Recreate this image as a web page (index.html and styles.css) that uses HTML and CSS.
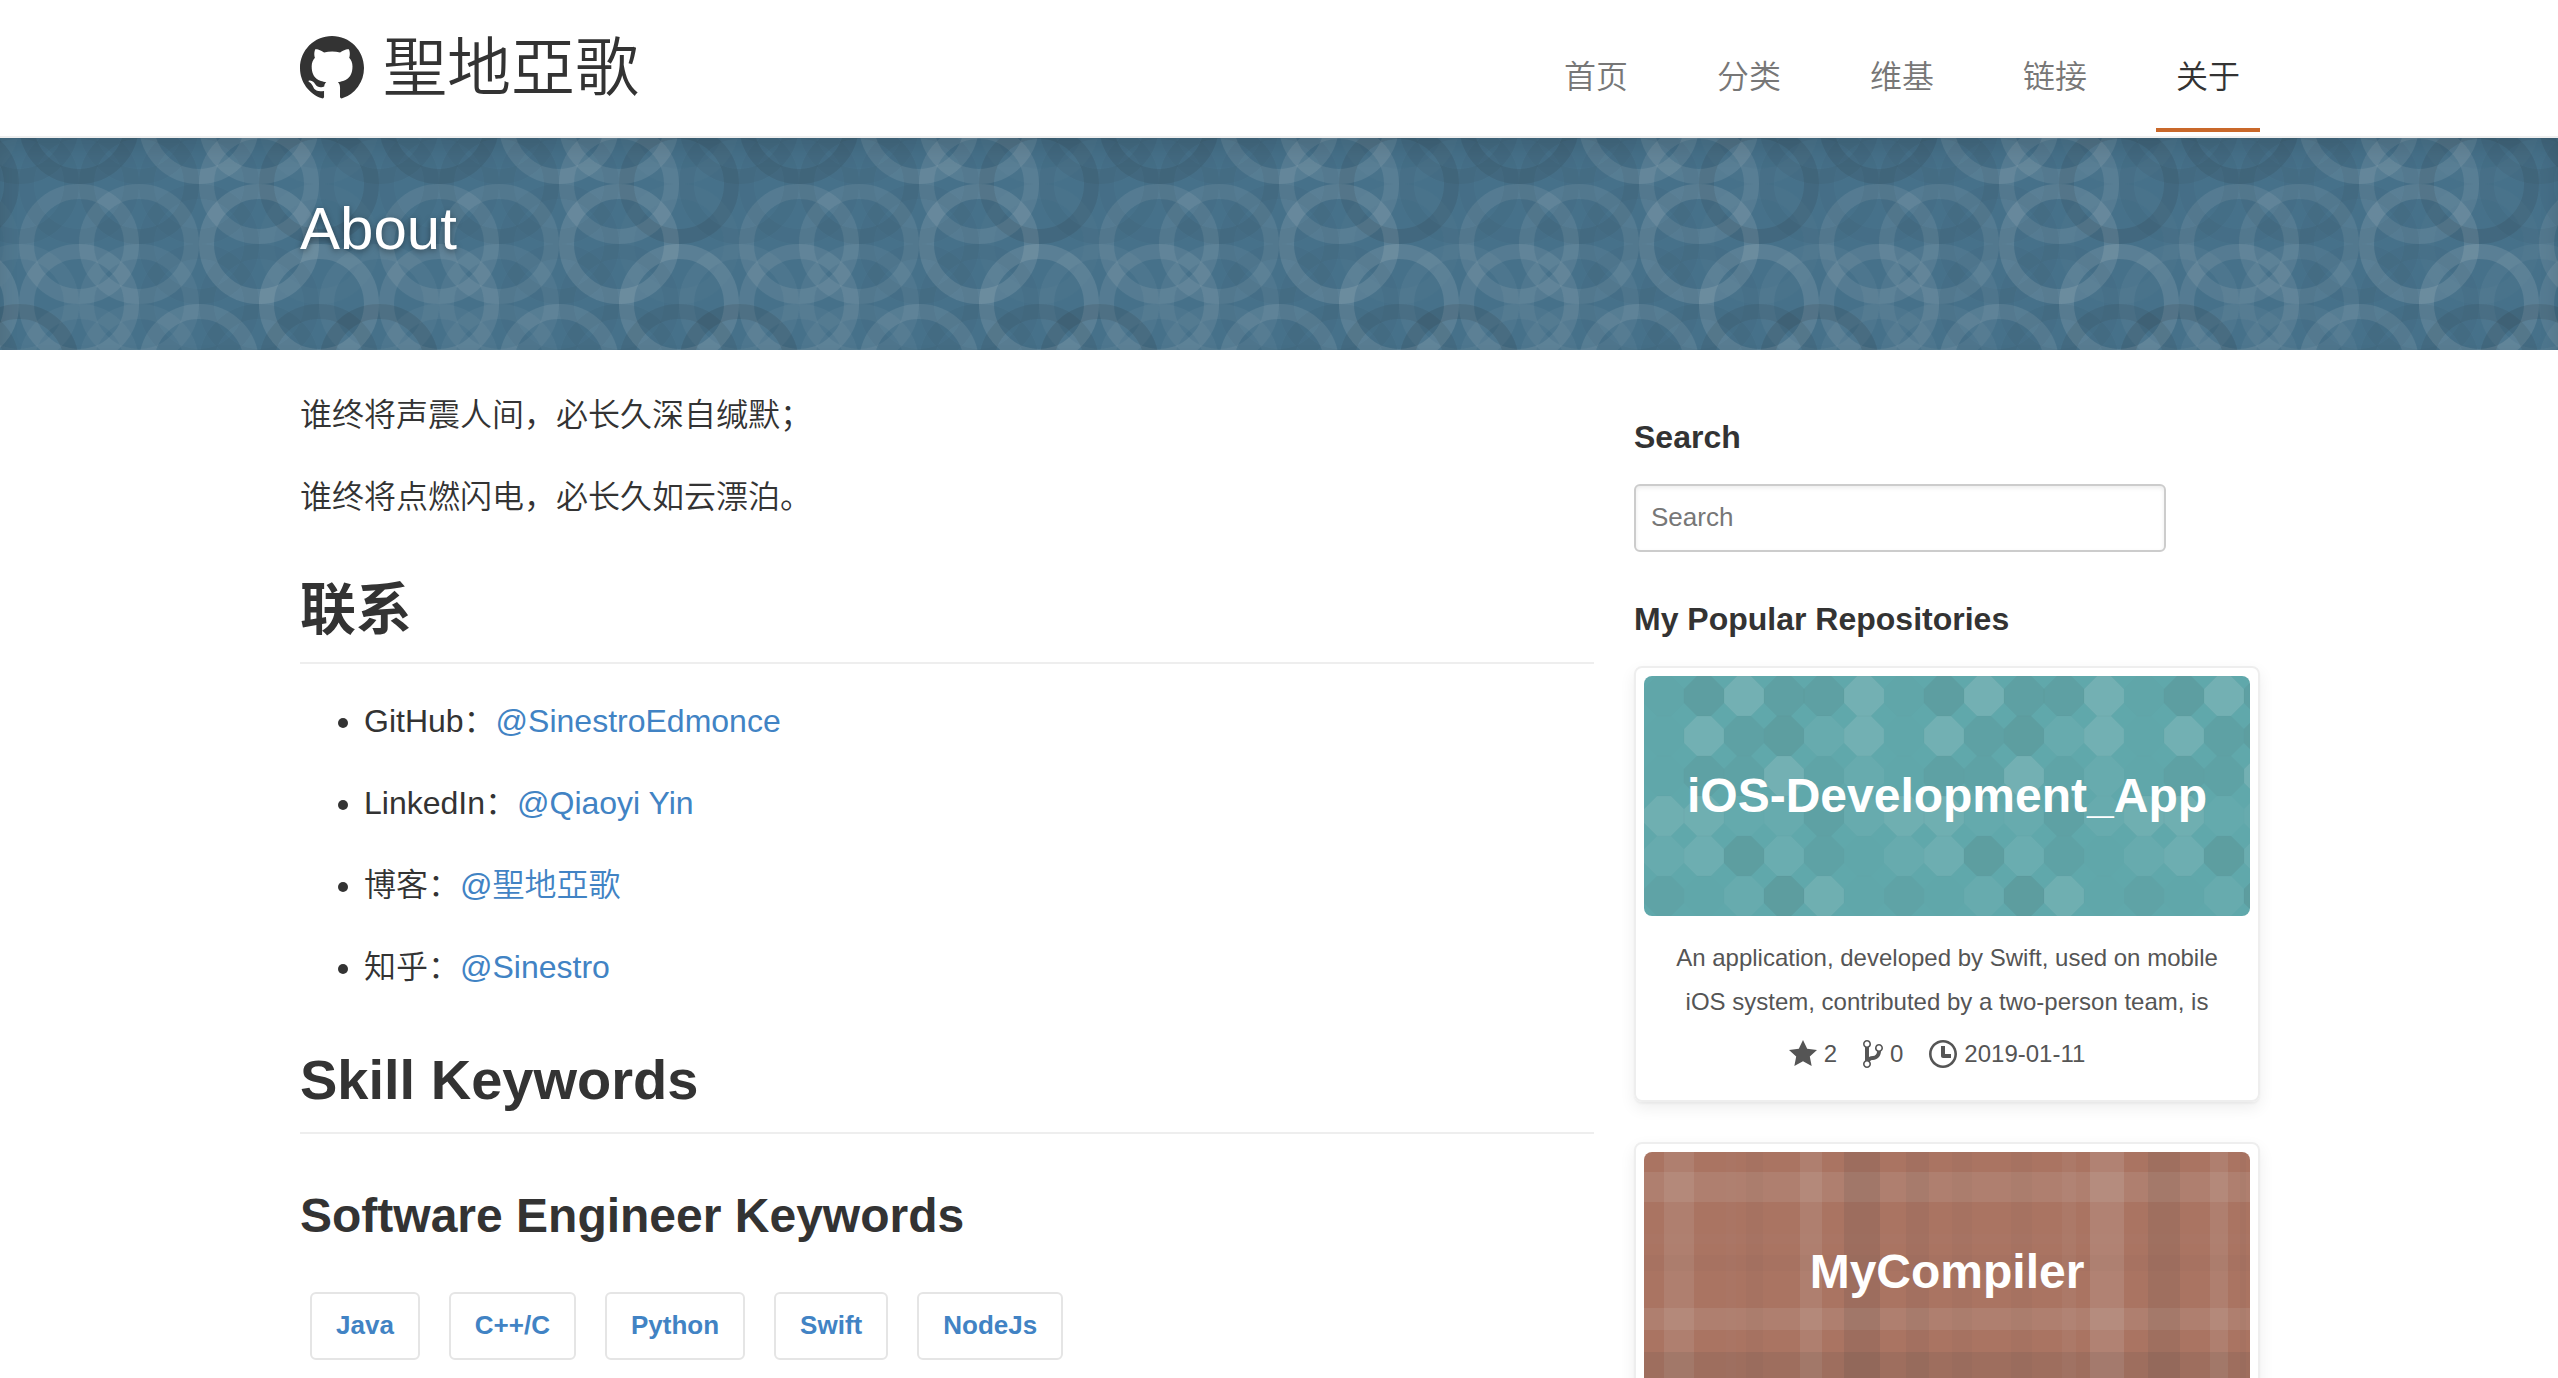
FILE: index.html
```html
<!DOCTYPE html>
<html lang="zh-CN">
<head>
<meta charset="utf-8">
<meta name="viewport" content="width=device-width, initial-scale=1">
<title>About - 聖地亞歌</title>
<link rel="stylesheet" href="styles.css">
</head>
<body>
<header class="site-header">
  <div class="container site-header-inner">
    <a class="brand" href="#">
      <svg class="brand-mark" viewBox="0 0 16 16" aria-hidden="true"><path d="M8 0C3.58 0 0 3.58 0 8c0 3.54 2.29 6.53 5.47 7.59.4.07.55-.17.55-.38 0-.19-.01-.82-.01-1.49-2.01.37-2.53-.49-2.69-.94-.09-.23-.48-.94-.82-1.13-.28-.15-.68-.52-.01-.53.63-.01 1.08.58 1.23.82.72 1.21 1.87.87 2.33.66.07-.52.28-.87.51-1.07-1.78-.2-3.64-.89-3.64-3.95 0-.87.31-1.59.82-2.15-.08-.2-.36-1.02.08-2.12 0 0 .67-.21 2.2.82.64-.18 1.32-.27 2-.27.68 0 1.36.09 2 .27 1.53-1.04 2.2-.82 2.2-.82.44 1.1.16 1.92.08 2.12.51.56.82 1.27.82 2.15 0 3.07-1.87 3.75-3.65 3.95.29.25.54.73.54 1.48 0 1.07-.01 1.93-.01 2.2 0 .21.15.46.55.38A8.013 8.013 0 0 0 16 8c0-4.42-3.58-8-8-8z"/></svg>
      <span>聖地亞歌</span>
    </a>
    <nav class="site-nav">
      <a href="#">首页</a>
      <a href="#">分类</a>
      <a href="#">维基</a>
      <a href="#">链接</a>
      <a class="selected" href="#" aria-current="page">关于</a>
    </nav>
  </div>
</header>

<section class="banner">
  <div class="container">
    <h1 class="banner-title">About</h1>
  </div>
</section>

<div class="container columns">
  <main class="article">
    <p>谁终将声震人间，必长久深自缄默；</p>
    <p>谁终将点燃闪电，必长久如云漂泊。</p>

    <h1>联系</h1>
    <ul class="contacts">
      <li>GitHub：<a href="#">@SinestroEdmonce</a></li>
      <li>LinkedIn：<a href="#">@Qiaoyi Yin</a></li>
      <li>博客：<a href="#">@聖地亞歌</a></li>
      <li>知乎：<a href="#">@Sinestro</a></li>
    </ul>

    <h1>Skill Keywords</h1>
    <h2>Software Engineer Keywords</h2>
    <div class="keywords">
      <button class="keyword" type="button">Java</button>
      <button class="keyword" type="button">C++/C</button>
      <button class="keyword" type="button">Python</button>
      <button class="keyword" type="button">Swift</button>
      <button class="keyword" type="button">NodeJs</button>
    </div>
  </main>

  <aside class="sidebar">
    <h3><label for="search">Search</label></h3>
    <input class="search" id="search" type="text" placeholder="Search">

    <h3>My Popular Repositories</h3>
    <article class="card">
      <a class="card-image octagons" href="#">iOS-Development_App</a>
      <p class="card-text">An application, developed by Swift, used on mobile iOS system, contributed by a two-person team, is</p>
      <div class="card-meta">
        <span class="meta" title="Stars"><svg width="28" height="32" viewBox="0 0 14 16" aria-hidden="true"><path d="M14 6l-4.9-.64L7 1 4.9 5.36 0 6l3.6 3.26L2.67 14 7 11.67 11.33 14l-.93-4.74z"/></svg>2</span>
        <span class="meta" title="Forks"><svg width="20" height="32" viewBox="0 0 10 16" aria-hidden="true"><path fill-rule="evenodd" d="M10 5c0-1.11-.89-2-2-2a1.993 1.993 0 0 0-1 3.72v.3c-.02.52-.23.98-.63 1.38-.4.4-.86.61-1.38.63-.83.02-1.48.16-2 .45V4.72a1.993 1.993 0 0 0-1-3.72C.88 1 0 1.89 0 3a2 2 0 0 0 1 1.72v6.56c-.59.35-1 .99-1 1.72 0 1.11.89 2 2 2 1.11 0 2-.89 2-2 0-.53-.2-1-.53-1.36.09-.06.48-.41.59-.47.25-.11.56-.17.94-.17 1.05-.05 1.95-.45 2.75-1.25S8.95 7.77 9 6.73h-.02C9.59 6.37 10 5.73 10 5zM2 1.8c.66 0 1.2.55 1.2 1.2 0 .65-.55 1.2-1.2 1.2C1.35 4.2.8 3.65.8 3c0-.65.55-1.2 1.2-1.2zm0 12.41c-.66 0-1.2-.55-1.2-1.2 0-.65.55-1.2 1.2-1.2.65 0 1.2.55 1.2 1.2 0 .65-.55 1.2-1.2 1.2zm6-8c-.66 0-1.2-.55-1.2-1.2 0-.65.55-1.2 1.2-1.2.65 0 1.2.55 1.2 1.2 0 .65-.55 1.2-1.2 1.2z"/></svg>0</span>
        <span class="meta" title="Last updated"><svg width="28" height="32" viewBox="0 0 14 16" aria-hidden="true"><path fill-rule="evenodd" d="M8 8h3v2H7c-.55 0-1-.45-1-1V4h2v4zM7 2.3c3.14 0 5.7 2.56 5.7 5.7s-2.56 5.7-5.7 5.7A5.71 5.71 0 0 1 1.3 8c0-3.14 2.56-5.7 5.7-5.7zM7 1C3.14 1 0 4.14 0 8s3.14 7 7 7 7-3.14 7-7-3.14-7-7-7z"/></svg>2019-01-11</span>
      </div>
    </article>
    <article class="card">
      <a class="card-image plaid" href="#">MyCompiler</a>
    </article>
  </aside>
</div>
</body>
</html>
```
FILE: styles.css
```css
* {
  box-sizing: border-box;
}

html {
  scrollbar-width: none;
}

body {
  margin: 0;
  background: #fff;
  color: #333;
  font-family: "Liberation Sans", "Noto Sans CJK SC", sans-serif;
  font-size: 32px;
  font-weight: 350;
  line-height: 50px;
}

a {
  color: #4183c4;
  text-decoration: none;
}

h1, h2, h3, p, ul {
  margin: 0;
}

.container {
  max-width: 1962px;
  margin: 0 auto;
  padding-left: 2px;
}

/* Header */

.site-header {
  border-bottom: 2px solid #eee;
}

.site-header-inner {
  display: flex;
  justify-content: space-between;
  align-items: flex-start;
}

.brand {
  display: flex;
  align-items: center;
  gap: 19px;
  height: 136px;
  color: #333;
  font-size: 64px;
}

.brand-mark {
  width: 64px;
  height: 64px;
  fill: #333;
}

.site-nav {
  display: flex;
  gap: 49px;
}

.site-nav a {
  padding: 53px 20px 27px;
  border-bottom: 4px solid transparent;
  color: #777;
  line-height: 48px;
}

.site-nav .selected {
  border-bottom-color: #c9682a;
  color: #333;
}

/* Banner with overlapping rings */

.banner {
  padding: 46px 0 76px;
  background: #46718a url("data:image/svg+xml,%3Csvg xmlns='http://www.w3.org/2000/svg' width='360' height='360' fill='none' stroke-width='15'%3E%3Cg stroke='%23ddd'%3E%3Ccircle cx='180' cy='60' r='52.5' opacity='.11'/%3E%3Ccircle cx='240' cy='60' r='52.5' opacity='.11'/%3E%3Ccircle cx='300' cy='60' r='52.5' opacity='.02'/%3E%3Ccircle cx='240' cy='120' r='52.5' opacity='.1'/%3E%3Ccircle cx='240' cy='180' r='52.5' opacity='.13'/%3E%3Ccircle cx='300' cy='180' r='52.5' opacity='.02'/%3E%3Ccircle cx='60' cy='180' r='52.5' opacity='.1'/%3E%3Ccircle cx='120' cy='180' r='52.5' opacity='.09'/%3E%3Ccircle cx='300' cy='240' r='52.5' opacity='.13'/%3E%3Ccircle cx='0' cy='240' r='52.5' opacity='.05'/%3E%3Ccircle cx='360' cy='240' r='52.5' opacity='.05'/%3E%3Ccircle cx='60' cy='240' r='52.5' opacity='.1'/%3E%3Ccircle cx='120' cy='240' r='52.5' opacity='.06'/%3E%3Ccircle cx='180' cy='300' r='52.5' opacity='.11'/%3E%3Ccircle cx='60' cy='300' r='52.5' opacity='.05'/%3E%3Ccircle cx='120' cy='300' r='52.5' opacity='.05'/%3E%3C/g%3E%3Cg stroke='%23222'%3E%3Ccircle cx='0' cy='60' r='52.5' opacity='.06'/%3E%3Ccircle cx='360' cy='60' r='52.5' opacity='.06'/%3E%3Ccircle cx='60' cy='60' r='52.5' opacity='.1'/%3E%3Ccircle cx='120' cy='60' r='52.5' opacity='.03'/%3E%3Ccircle cx='300' cy='120' r='52.5' opacity='.1'/%3E%3Ccircle cx='0' cy='120' r='52.5' opacity='.04'/%3E%3Ccircle cx='360' cy='120' r='52.5' opacity='.04'/%3E%3Ccircle cx='60' cy='120' r='52.5' opacity='.03'/%3E%3Ccircle cx='120' cy='120' r='52.5' opacity='.06'/%3E%3Ccircle cx='180' cy='120' r='52.5' opacity='.03'/%3E%3Ccircle cx='180' cy='180' r='52.5' opacity='.03'/%3E%3Ccircle cx='240' cy='240' r='52.5' opacity='.03'/%3E%3Ccircle cx='180' cy='240' r='52.5' opacity='.03'/%3E%3Ccircle cx='240' cy='300' r='52.5' opacity='.04'/%3E%3Ccircle cx='300' cy='300' r='52.5' opacity='.09'/%3E%3Ccircle cx='0' cy='300' r='52.5' opacity='.12'/%3E%3Ccircle cx='360' cy='300' r='52.5' opacity='.12'/%3E%3C/g%3E%3C/svg%3E") center;
  box-shadow: inset 0 12px 20px rgba(0, 0, 0, .1);
}

.banner-title {
  color: #fff;
  font-size: 60px;
  font-weight: 400;
  line-height: 90px;
  text-shadow: 0 2px 6px rgba(0, 0, 0, .4);
}

/* Page columns */

.columns {
  display: grid;
  grid-template-columns: minmax(0, 1fr) 626px;
  gap: 40px;
  align-items: start;
}

.article {
  padding-top: 40px;
}

.article p {
  margin-bottom: 32px;
}

.article h1 {
  margin: 46px 0 32px;
  padding-bottom: 10px;
  border-bottom: 2px solid #eee;
  font-size: 56px;
  line-height: 84px;
}

.article h2 {
  margin: 46px 0 40px;
  font-size: 48px;
  line-height: 72px;
}

.contacts {
  padding-left: 64px;
}

.contacts li + li {
  margin-top: 32px;
}

.keywords {
  display: flex;
  flex-wrap: wrap;
  gap: 29px;
  padding-left: 10px;
}

.keyword {
  height: 68px;
  padding: 0 24px 2px;
  border: 2px solid #e5e5e5;
  border-radius: 6px;
  background: #fff;
  color: #4183c4;
  font: bold 26px "Liberation Sans", sans-serif;
}

/* Sidebar */

.sidebar {
  padding-top: 63px;
}

.sidebar h3 {
  margin-bottom: 23px;
  font-size: 32px;
  line-height: 48px;
}

.search {
  display: block;
  width: 85%;
  height: 68px;
  margin-bottom: 43px;
  padding: 0 15px 2px;
  border: 2px solid #ccc;
  border-radius: 6px;
  box-shadow: inset 0 2px 4px rgba(0, 0, 0, .08);
  color: #333;
  font: 26px "Liberation Sans", sans-serif;
}

.search::placeholder {
  color: #777;
}

.card {
  margin-bottom: 40px;
  padding: 8px 8px 24px;
  border: 2px solid #eee;
  border-radius: 8px;
  box-shadow: 0 2px 2px rgba(0, 0, 0, .04), 0 6px 16px rgba(0, 0, 0, .07);
  color: #555;
  font-size: 24px;
  line-height: 44px;
  text-align: center;
}

.card-image {
  display: flex;
  justify-content: center;
  align-items: center;
  height: 240px;
  border-radius: 8px;
  color: #fff;
  font-size: 48px;
  font-weight: 700;
}

.card-text {
  padding: 20px 20px 8px;
}

.card-meta {
  display: flex;
  justify-content: center;
  gap: 26px;
  padding-right: 20px;
}

.meta {
  display: flex;
  align-items: center;
  gap: 7px;
}

.meta svg {
  fill: #555;
}

.octagons {
  background: #60a8ab url("data:image/svg+xml,%3Csvg xmlns='http://www.w3.org/2000/svg' xmlns:xlink='http://www.w3.org/1999/xlink' width='240' height='240'%3E%3Cdefs%3E%3Cpath id='o' stroke='%23000' stroke-opacity='.1' d='M13 0h14l13 13v14l-13 13h-14l-13 -13v-14z'/%3E%3C/defs%3E%3Cg fill='%23ddd'%3E%3Cuse xlink:href='%23o' x='80' y='0' opacity='.15'/%3E%3Cuse xlink:href='%23o' x='200' y='0' opacity='.15'/%3E%3Cuse xlink:href='%23o' x='40' y='40' opacity='.14'/%3E%3Cuse xlink:href='%23o' x='160' y='40' opacity='.06'/%3E%3Cuse xlink:href='%23o' x='200' y='40' opacity='.14'/%3E%3Cuse xlink:href='%23o' x='120' y='80' opacity='.15'/%3E%3Cuse xlink:href='%23o' x='200' y='80' opacity='.06'/%3E%3Cuse xlink:href='%23o' x='0' y='120' opacity='.12'/%3E%3Cuse xlink:href='%23o' x='40' y='120' opacity='.12'/%3E%3Cuse xlink:href='%23o' x='80' y='120' opacity='.03'/%3E%3Cuse xlink:href='%23o' x='120' y='120' opacity='.05'/%3E%3Cuse xlink:href='%23o' x='200' y='120' opacity='.06'/%3E%3Cuse xlink:href='%23o' x='0' y='160' opacity='.06'/%3E%3Cuse xlink:href='%23o' x='40' y='160' opacity='.1'/%3E%3Cuse xlink:href='%23o' x='120' y='160' opacity='.08'/%3E%3Cuse xlink:href='%23o' x='80' y='200' opacity='.05'/%3E%3Cuse xlink:href='%23o' x='160' y='200' opacity='.12'/%3E%3C/g%3E%3Cg fill='%23444'%3E%3Cuse xlink:href='%23o' x='0' y='0' opacity='.03'/%3E%3Cuse xlink:href='%23o' x='40' y='0' opacity='.1'/%3E%3Cuse xlink:href='%23o' x='120' y='0' opacity='.09'/%3E%3Cuse xlink:href='%23o' x='160' y='0' opacity='.09'/%3E%3Cuse xlink:href='%23o' x='0' y='40' opacity='.02'/%3E%3Cuse xlink:href='%23o' x='80' y='40' opacity='.07'/%3E%3Cuse xlink:href='%23o' x='120' y='40' opacity='.11'/%3E%3Cuse xlink:href='%23o' x='0' y='80' opacity='.02'/%3E%3Cuse xlink:href='%23o' x='40' y='80' opacity='.08'/%3E%3Cuse xlink:href='%23o' x='80' y='80' opacity='.06'/%3E%3Cuse xlink:href='%23o' x='160' y='80' opacity='.04'/%3E%3Cuse xlink:href='%23o' x='160' y='120' opacity='.08'/%3E%3Cuse xlink:href='%23o' x='80' y='160' opacity='.11'/%3E%3Cuse xlink:href='%23o' x='160' y='160' opacity='.06'/%3E%3Cuse xlink:href='%23o' x='200' y='160' opacity='.02'/%3E%3Cuse xlink:href='%23o' x='0' y='200' opacity='.05'/%3E%3Cuse xlink:href='%23o' x='40' y='200' opacity='.02'/%3E%3Cuse xlink:href='%23o' x='120' y='200' opacity='.12'/%3E%3Cuse xlink:href='%23o' x='200' y='200' opacity='.02'/%3E%3C/g%3E%3C/svg%3E");
}

.plaid {
  background: #aa7462 url("data:image/svg+xml,%3Csvg xmlns='http://www.w3.org/2000/svg' width='620' height='620'%3E%3Cg fill='%23ddd'%3E%3Cpath opacity='.1' d='M0 20h620v30H0zM0 156h620v22H0z'/%3E%3Cpath opacity='.02' d='M0 82h620v10H0z'/%3E%3Cpath opacity='.1' d='M20 0h30v620H20zM156 0h22v620h-22zM566 0h18v620h-18z'/%3E%3Cpath opacity='.14' d='M446 0h34v620h-34z'/%3E%3Cpath opacity='.02' d='M82 0h10v620H82z'/%3E%3Cpath opacity='.05' d='M418 0h14v620h-14z'/%3E%3C/g%3E%3Cg fill='%23444'%3E%3Cpath opacity='.02' d='M0 103h620v16H0z'/%3E%3Cpath opacity='.11' d='M0 200h620v36H0z'/%3E%3Cpath opacity='.04' d='M102 0h17v620h-17zM596 0h6v620h-6z'/%3E%3Cpath opacity='.12' d='M200 0h36v620h-36z'/%3E%3Cpath opacity='.07' d='M262 0h23v620h-23z'/%3E%3Cpath opacity='.1' d='M504 0h32v620h-32z'/%3E%3Cpath opacity='.04' d='M308 0h20v620h-20zM367 0h21v620h-21z'/%3E%3C/g%3E%3C/svg%3E");
}
```
